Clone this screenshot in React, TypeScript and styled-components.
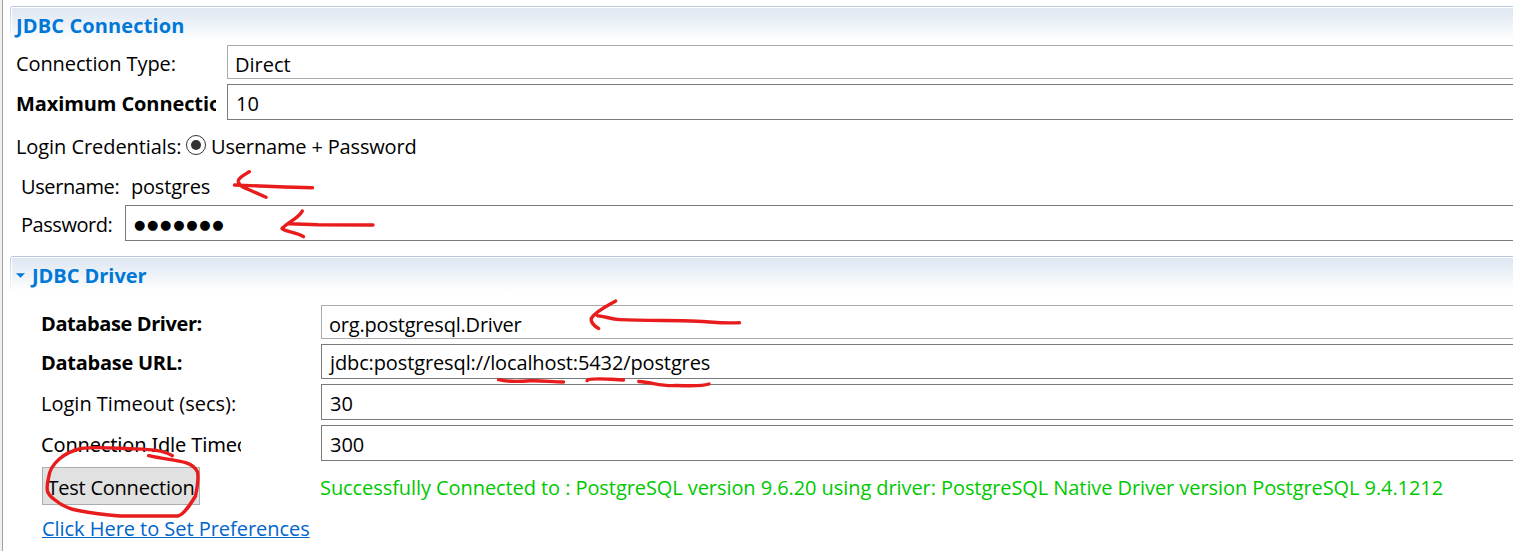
import React from 'react';
import styled, { createGlobalStyle, css } from 'styled-components';

const GlobalStyle = createGlobalStyle`
  *, *::before, *::after { box-sizing: border-box; }
  body {
    margin: 0;
    background: #fff;
    color: #000;
    font-family: 'Open Sans', 'Noto Sans', sans-serif;
    font-size: 20px;
    line-height: 28px;
    overflow: hidden;
  }
`;

const Editor = styled.main`
  position: relative;
  height: 551px;
  padding: 6px 0 0 7px;
  border-left: 1px solid #a0a0a0;
  margin-left: 2px;
  overflow: hidden;
  box-shadow: -2px 0 0 #f0f0f0;
`;

const SectionHeader = styled.header`
  display: flex;
  align-items: flex-start;
  height: 37px;
  padding: 5px 0 0 6px;
  border-top: 1px solid #b5c9e0;
  border-top-left-radius: 3px;
  background:
    linear-gradient(#b9cce2, #fff) 0 0 / 1px 100% no-repeat,
    linear-gradient(#fff, #fff) 1px 0 / 100% 1px no-repeat,
    linear-gradient(#fff, #fff) 1px 0 / 1px 100% no-repeat,
    linear-gradient(#e0e8f2 10%, #f0f4f9 55%, #fff 94%);
`;

const SectionTitle = styled.h2<{ $track?: number }>`
  margin: 0;
  color: #0078d7;
  font-size: 20px;
  font-weight: 700;
  letter-spacing: ${(p) => p.$track ?? 0}px;
  white-space: nowrap;
`;

const Twistie = styled.svg`
  width: 9px;
  height: 5px;
  margin: 11px 7px 0 0;
`;

const Section = styled.section<{ $indent: number; $gap: number }>`
  padding: ${(p) => p.$gap}px 0 0 ${(p) => p.$indent}px;
`;

const Row = styled.div<{ $height: number; $gap?: number; $indent?: number }>`
  display: flex;
  align-items: flex-start;
  height: ${(p) => p.$height}px;
  margin-bottom: ${(p) => p.$gap ?? 6}px;
  padding-left: ${(p) => p.$indent ?? 0}px;
`;

const LabelCell = styled.div<{ $width: number; $clip?: number; $top: number }>`
  flex: none;
  width: ${(p) => p.$width}px;
  padding-top: ${(p) => p.$top}px;
  white-space: nowrap;
  ${(p) => p.$clip && css`
    width: ${p.$clip}px;
    margin-right: ${p.$width - p.$clip}px;
    overflow: hidden;
  `}
`;

const Label = styled.span<{ $bold?: boolean; $track?: number }>`
  font-weight: ${(p) => (p.$bold ? 700 : 400)};
  letter-spacing: ${(p) => p.$track ?? 0}px;
  white-space: nowrap;
`;

const SerifILabel = styled(Label)`
  display: block;
  font-family: 'Noto Sans', sans-serif;
`;

const Field = styled.div<{ $readOnly?: boolean; $track?: number; $top?: number }>`
  flex: 1;
  height: 100%;
  padding: ${(p) => p.$top ?? 5}px 0 0 ${(p) => (p.$readOnly ? 7 : 8)}px;
  border: 1px solid ${(p) => (p.$readOnly ? '#ababab' : '#7a7a7a')};
  border-right: 0;
  letter-spacing: ${(p) => p.$track ?? 0}px;
  white-space: nowrap;
`;

const Mask = styled.span`
  display: block;
  font-family: 'DejaVu Sans', sans-serif;
  font-size: 13px;
  letter-spacing: 1.7px;
`;

const Radio = styled.span`
  display: grid;
  place-items: center;
  flex: none;
  width: 20px;
  height: 20px;
  margin: 5px 5px 0 0;
  border: 1px solid #333;
  border-radius: 50%;

  &::after {
    content: '';
    width: 10px;
    height: 10px;
    border-radius: 50%;
    background: #333;
  }
`;

const TestButton = styled.button`
  flex: none;
  width: 158px;
  height: 38px;
  margin: 0 120px 0 1px;
  padding: 3px 0 0;
  border: 1px solid #adadad;
  background: #e1e1e1;
  color: #000;
  font: inherit;
  letter-spacing: -0.22px;
  white-space: nowrap;
`;

const Status = styled.span`
  padding-top: 7px;
  color: #00c800;
  letter-spacing: -0.075px;
  white-space: nowrap;
`;

const PreferencesLink = styled.a`
  margin: 1px 0 0 1px;
  color: #0066cc;
  letter-spacing: -0.04px;
  text-decoration: underline;
  text-decoration-thickness: 1px;
  text-underline-offset: 1px;
  text-decoration-skip-ink: none;
  white-space: nowrap;
`;

const Markup = styled.svg`
  position: absolute;
  top: 0;
  left: -3px;
  width: 1513px;
  height: 551px;
  fill: none;
  stroke: #e81c1c;
  stroke-width: 3.4;
  stroke-linecap: round;
  stroke-linejoin: round;
  pointer-events: none;
`;

export default function App() {
  return (
    <>
      <GlobalStyle />
      <Editor>
        <SectionHeader>
          <SectionTitle $track={0.12}>JDBC Connection</SectionTitle>
        </SectionHeader>
        <Section $indent={6} $gap={2}>
          <Row $height={34} $gap={5}>
            <LabelCell $width={211} $top={5}><Label $track={-0.1}>Connection Type:</Label></LabelCell>
            <Field $readOnly>Direct</Field>
          </Row>
          <Row $height={36} $gap={10}>
            <LabelCell $width={211} $clip={200} $top={6}>
              <Label $bold $track={-0.1}>Maximum Connections:</Label>
            </LabelCell>
            <Field>10</Field>
          </Row>
          <Row $height={30} $gap={8}>
            <LabelCell $width={170} $top={3}><Label $track={-0.07}>Login Credentials:</Label></LabelCell>
            <Radio />
            <LabelCell $width={220} $top={3}><Label $track={-0.16}>Username + Password</Label></LabelCell>
          </Row>
          <Row $height={31} $indent={5}>
            <LabelCell $width={110} $top={5}><Label $track={-0.4}>Username:</Label></LabelCell>
            <LabelCell $width={90} $top={5}><Label $track={-0.2}>postgres</Label></LabelCell>
          </Row>
          <Row $height={36} $gap={15} $indent={5}>
            <LabelCell $width={104} $top={6}><Label $track={-0.45}>Password:</Label></LabelCell>
            <Field><Mask>●●●●●●●</Mask></Field>
          </Row>
        </Section>
        <SectionHeader>
          <Twistie viewBox="0 0 9 5"><path d="M0 0.3h9L4.5 4.8z" fill="#0078d7" /></Twistie>
          <SectionTitle $track={-0.05}>JDBC Driver</SectionTitle>
        </SectionHeader>
        <Section $indent={31} $gap={12}>
          <Row $height={34} $gap={5}>
            <LabelCell $width={280} $top={5}><Label $bold $track={-0.4}>Database Driver:</Label></LabelCell>
            <Field $readOnly $track={-0.2}>org.postgresql.Driver</Field>
          </Row>
          <Row $height={35} $gap={5}>
            <LabelCell $width={280} $top={5}><Label $bold $track={-0.27}>Database URL:</Label></LabelCell>
            <Field $top={4} $track={-0.12}>jdbc:postgresql://localhost:5432/postgres</Field>
          </Row>
          <Row $height={36} $gap={5}>
            <LabelCell $width={280} $top={6}><Label>Login Timeout (secs):</Label></LabelCell>
            <Field>30</Field>
          </Row>
          <Row $height={36}>
            <LabelCell $width={280} $clip={200} $top={6}>
              <SerifILabel $track={-0.18}>Connection Idle Timeout (secs):</SerifILabel>
            </LabelCell>
            <Field>300</Field>
          </Row>
          <Row $height={38} $gap={9}>
            <TestButton type="button">Test Connection</TestButton>
            <Status>
              Successfully Connected to : PostgreSQL version 9.6.20 using driver: PostgreSQL Native Driver version PostgreSQL 9.4.1212
            </Status>
          </Row>
          <Row $height={30}>
            <PreferencesLink>Click Here to Set Preferences</PreferencesLink>
          </Row>
        </Section>
        <Markup viewBox="0 0 1513 551">
          <path d="M312.5 187.8 L285 187 L234.5 185 M249.3 171.7 C244 175 238 178 238.3 181.5 C239 187 248 189 253 191.5 L266 197.3" />
          <path d="M373 225 L318 224.8 L289 223.7 M302.3 211 C299 218 289 221.5 282 228.5 C284 231.5 297 232 303.5 236.7" />
          <path d="M597.5 315.7 C606 316.5 610 319 620 319.6 C645 321 675 320 697 321.2 C713 322 720 323.5 739.5 322.7 M615.7 301 C608 305.5 597 310 591.5 318 C590 321.5 594 326 598.7 328.5" />
          <path d="M498.7 379.7 C506 381.5 520 381.5 530 380.8 C542 380.3 552 382 563.5 382" />
          <path d="M587 380.7 C589 378 602 379 611 379.3 L623.5 380" />
          <path d="M638.7 381.5 C652 382.5 660 385.8 673 385.6 C684 385.3 700 387 709 384" />
          <path d="M172.3 455.7 C162 449.5 148 449.5 130 448.7 C112 448 95 446.5 81 448.5 C65 452 50 463 48.5 478 C45.5 491 47 494 55 500 C62 506 69 509 78 510.5 C94 513.5 108 515 120 516 L178 516 C184 514.5 190 505 195.5 496 C197 488 199 480 197.5 472 C192 459 170 461 148.7 455.7" />
        </Markup>
      </Editor>
    </>
  );
}
